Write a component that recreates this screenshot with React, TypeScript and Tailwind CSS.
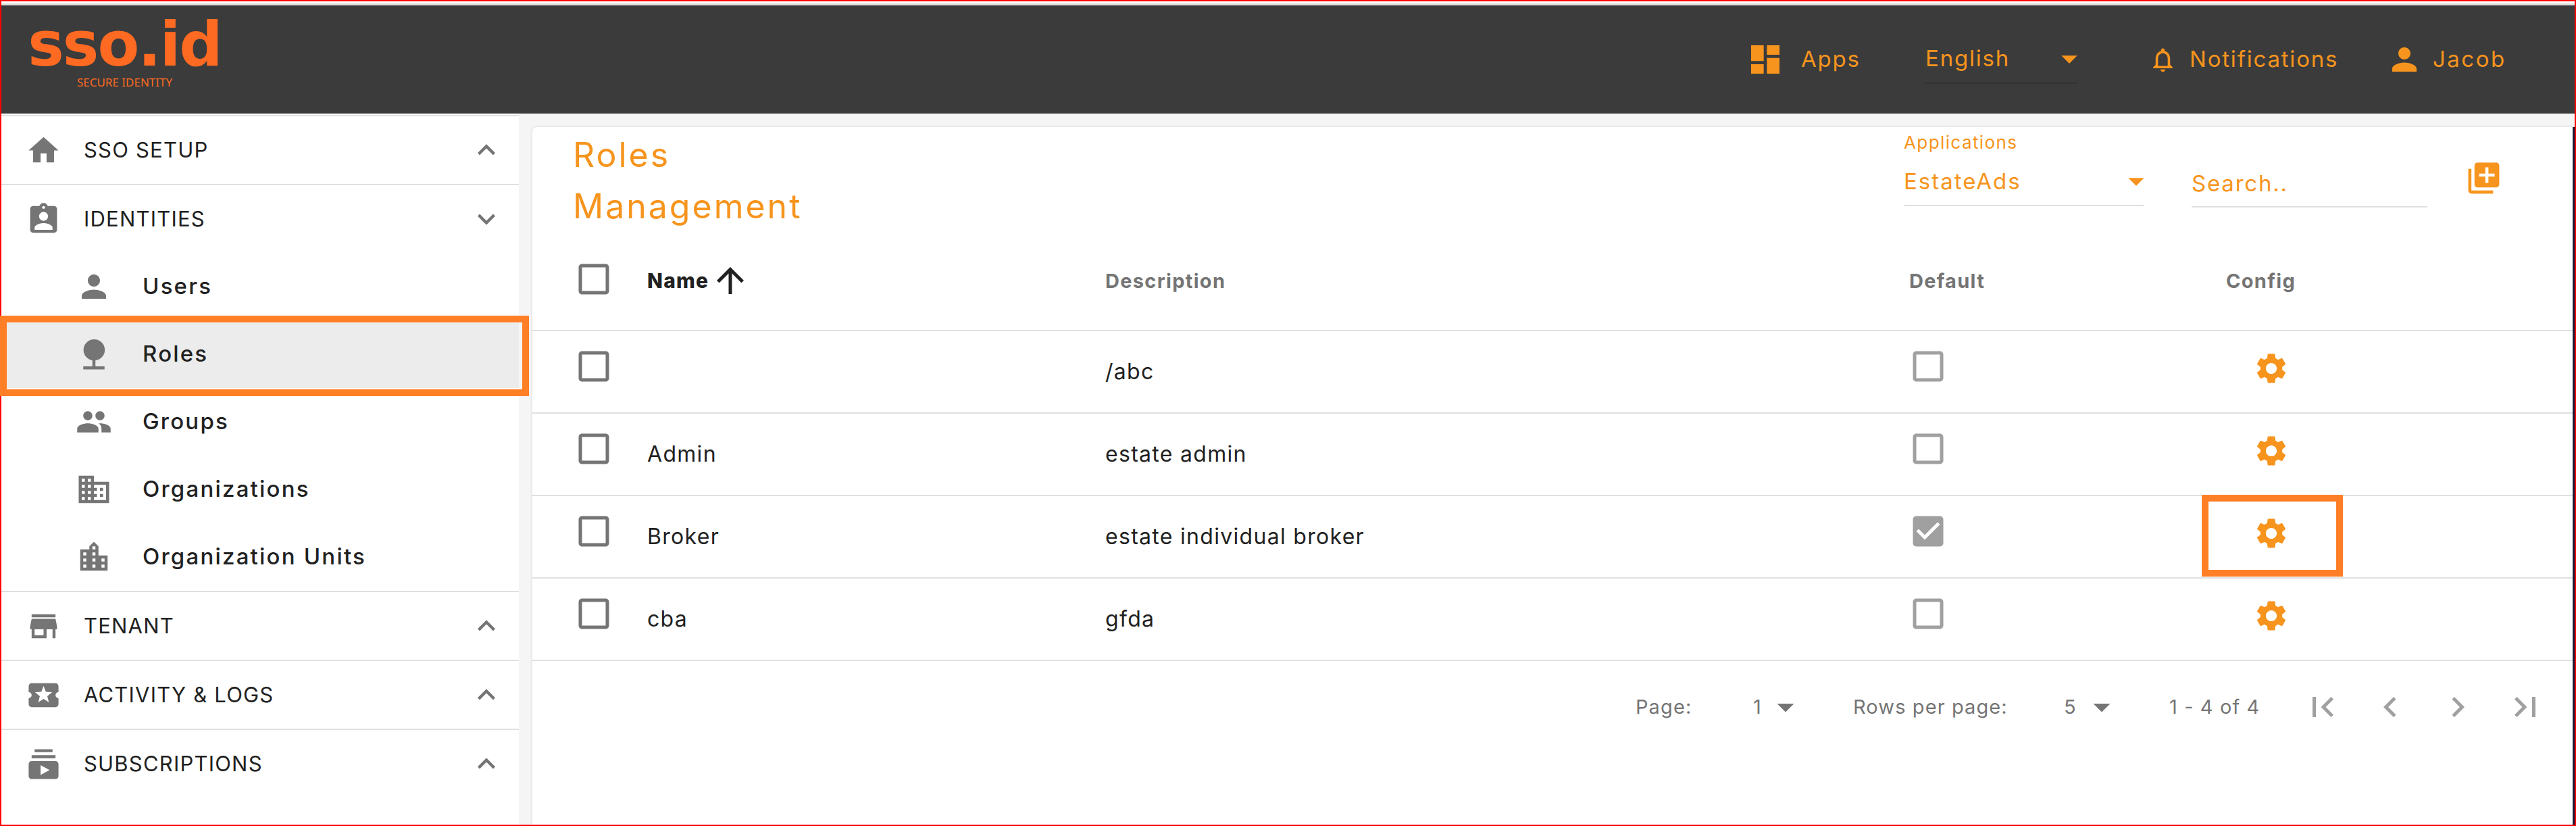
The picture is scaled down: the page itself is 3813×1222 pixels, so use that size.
import React from 'react';
import {
  MdHome, MdAssignmentInd, MdPerson, MdNature, MdPeople, MdDomain, MdLocationCity, MdStore,
  MdLocalActivity, MdSubscriptions, MdExpandLess, MdExpandMore, MdDashboard, MdArrowDropDown,
  MdNotificationsNone, MdLibraryAdd, MdCheckBoxOutlineBlank, MdCheckBox, MdSettings, MdArrowUpward,
  MdFirstPage, MdChevronLeft, MdChevronRight, MdLastPage,
} from 'react-icons/md';

const roles = [
  { name: '', description: '/abc', isDefault: false },
  { name: 'Admin', description: 'estate admin', isDefault: false },
  { name: 'Broker', description: 'estate individual broker', isDefault: true },
  { name: 'cba', description: 'gfda', isDefault: false },
];

const SectionRow = ({ icon: Icon, label, open }: { icon: React.ElementType; label: string; open?: boolean }) => (
  <div className="flex h-[100px] items-center pl-[36px] text-[#212121]">
    <Icon size={53} className="text-[#757575] shrink-0" />
    <span className="ml-[33px] flex-1 text-[31px] tracking-[1.2px]">{label}</span>
    {open ? <MdExpandMore size={52} className="mr-[22px] text-[#757575]" /> : <MdExpandLess size={52} className="mr-[22px] text-[#757575]" />}
  </div>
);

const SubRow = ({ icon: Icon, label, active }: { icon: React.ElementType; label: string; active?: boolean }) => (
  <div className={`flex h-[100px] items-center pl-[110px] text-[#212121] ${active ? 'bg-[#ececec]' : ''}`}>
    <Icon size={54} className="text-[#757575] shrink-0" />
    <span className="ml-[45px] text-[33px] font-medium tracking-[2.2px]">{label}</span>
  </div>
);

const App: React.FC = () => {
  return (
    <div className="relative flex h-[1222px] w-[3813px] flex-col border-2 border-[#ff0000] bg-[#f5f5f5] font-['Inter',sans-serif]">
      <div className="h-[6px] border-b-[3px] border-[#dddddd] bg-white" />

      {/* Header */}
      <header className="flex h-[160px] shrink-0 items-center bg-[#3b3b3b] text-[33px] tracking-[1.8px] text-[#f7941d]">
        <div className="w-[2583px] pb-[16px] pl-[44px]">
          <div className="flex w-[277px] flex-col items-center text-[#ff6a22]">
            <span className="font-['DejaVu_Sans',sans-serif] text-[90px] font-bold leading-[76px] tracking-[-2px]">sso.id</span>
            <span className="mt-[8px] font-['Noto_Sans',sans-serif] text-[17px] leading-[20px] tracking-normal">SECURE IDENTITY</span>
          </div>
        </div>
        <div className="flex w-[265px] items-center">
          <MdDashboard size={56} />
          <span className="ml-[25px]">Apps</span>
        </div>
        <div className="flex h-[72px] w-[225px] items-center justify-between border-b-2 border-[#333333]">
          <span>English</span>
          <MdArrowDropDown size={56} className="-mr-[16px]" />
        </div>
        <div className="ml-[105px] flex w-[352px] items-center">
          <MdNotificationsNone size={43} />
          <span className="ml-[18px]">Notifications</span>
        </div>
        <div className="flex items-center">
          <MdPerson size={54} />
          <span className="ml-[15px] tracking-[2.5px]">Jacob</span>
        </div>
      </header>

      <div className="flex min-h-0 flex-1">
        {/* Sidebar */}
        <aside className="w-[766px] shrink-0 bg-white pt-[2px]">
          <div className="border-t-2 border-[#e0e0e0]" />
          <SectionRow icon={MdHome} label="SSO SETUP" />
          <div className="border-t-2 border-[#e0e0e0]" />
          <SectionRow icon={MdAssignmentInd} label="IDENTITIES" open />
          <SubRow icon={MdPerson} label="Users" />
          <SubRow icon={MdNature} label="Roles" active />
          <SubRow icon={MdPeople} label="Groups" />
          <SubRow icon={MdDomain} label="Organizations" />
          <SubRow icon={MdLocationCity} label="Organization Units" />
          <div className="border-t-2 border-[#e0e0e0]" />
          <SectionRow icon={MdStore} label="TENANT" />
          <div className="border-t-2 border-[#e0e0e0]" />
          <SectionRow icon={MdLocalActivity} label="ACTIVITY & LOGS" />
          <div className="border-t-2 border-[#e0e0e0]" />
          <SectionRow icon={MdSubscriptions} label="SUBSCRIPTIONS" />
        </aside>

        {/* Main */}
        <main className="flex-1 pl-[20px] pt-[20px]">
          <div className="h-full rounded-tl-[6px] border-r-[3px] border-[#1a1a3a] bg-white shadow-[0_0_4px_rgba(0,0,0,0.15)]">
            <div className="flex h-[185px] items-start">
              <h1 className="w-[2030px] pl-[60px] pt-[3px] text-[50px] font-normal leading-[76px] tracking-[3px] text-[#f7941d]">
                Roles<br />Management
              </h1>
              <div className="flex h-[117px] w-[356px] flex-col border-b-2 border-[#e0e0e0] text-[#f7941d]">
                <span className="mt-[5px] text-[26px] leading-[36px] tracking-[1.4px]">Applications</span>
                <div className="mt-[17px] flex items-center justify-between">
                  <span className="text-[33px] leading-[44px] tracking-[2px]">EstateAds</span>
                  <MdArrowDropDown size={56} className="-mr-[16px] -my-[6px]" />
                </div>
              </div>
              <div className="ml-[70px] flex h-[119px] w-[349px] items-end border-b-2 border-[#e0e0e0] pb-[12px] text-[33px] leading-[44px] tracking-[1.8px] text-[#f7941d]">
                Search..
              </div>
              <MdLibraryAdd size={55} className="ml-[56px] mt-[48px] text-[#f7941d]" />
            </div>

            {/* Table */}
            <div className="flex h-[117px] items-center border-b-2 border-[#e0e0e0] pb-[36px] text-[29px] font-bold tracking-[1.3px] text-[#757575]">
              <div className="w-[170px] pl-[61px]"><MdCheckBoxOutlineBlank size={60} /></div>
              <div className="flex w-[678px] items-center font-extrabold tracking-[1.2px] text-[#212121]">
                <span className="pt-[6px] text-[30px]">Name</span>
                <MdArrowUpward size={60} className="ml-[2px] mt-[4px]" />
              </div>
              <div className="w-[1190px] pt-[6px]">Description</div>
              <div className="w-[469px] pt-[6px]">Default</div>
              <div className="pt-[6px]">Config</div>
            </div>
            {roles.map((role) => (
              <div key={role.description} className="flex h-[122px] items-center border-b-2 border-[#e0e0e0] text-[32px] tracking-[1.3px] text-[#212121]">
                <div className="w-[170px] pb-[16px] pl-[61px] text-[#757575]"><MdCheckBoxOutlineBlank size={60} /></div>
                <div className="w-[678px]">{role.name}</div>
                <div className="w-[1188px]">{role.description}</div>
                <div className="w-[469px] pb-[16px] text-[#a0a0a0]">
                  {role.isDefault ? <MdCheckBox size={60} /> : <MdCheckBoxOutlineBlank size={60} />}
                </div>
                <div className="pb-[10px] pl-[42px] text-[#f7941d]"><MdSettings size={54} /></div>
              </div>
            ))}

            {/* Pagination */}
            <div className="flex h-[136px] items-center pl-[1633px] text-[29px] tracking-[1.1px] text-[#757575]">
              <span className="w-[174px]">Page:</span>
              <span className="w-[18px]">1</span>
              <MdArrowDropDown size={60} />
              <span className="ml-[70px] w-[312px]">Rows per page:</span>
              <span className="w-[26px]">5</span>
              <MdArrowDropDown size={60} />
              <span className="ml-[70px] w-[197px]">1 - 4 of 4</span>
              <div className="flex gap-[40px] text-[#a0a0a0]">
                <MdFirstPage size={60} />
                <MdChevronLeft size={60} />
                <MdChevronRight size={60} />
                <MdLastPage size={60} />
              </div>
            </div>
          </div>
        </main>
      </div>

      {/* Annotation boxes */}
      <div className="absolute left-[-2px] top-[465px] h-[119px] w-[783px] border-[10px] border-[#ff7f27]" />
      <div className="absolute left-[3257px] top-[730px] h-[121px] w-[209px] border-[10px] border-[#ff7f27]" />
    </div>
  );
};

export default App;
